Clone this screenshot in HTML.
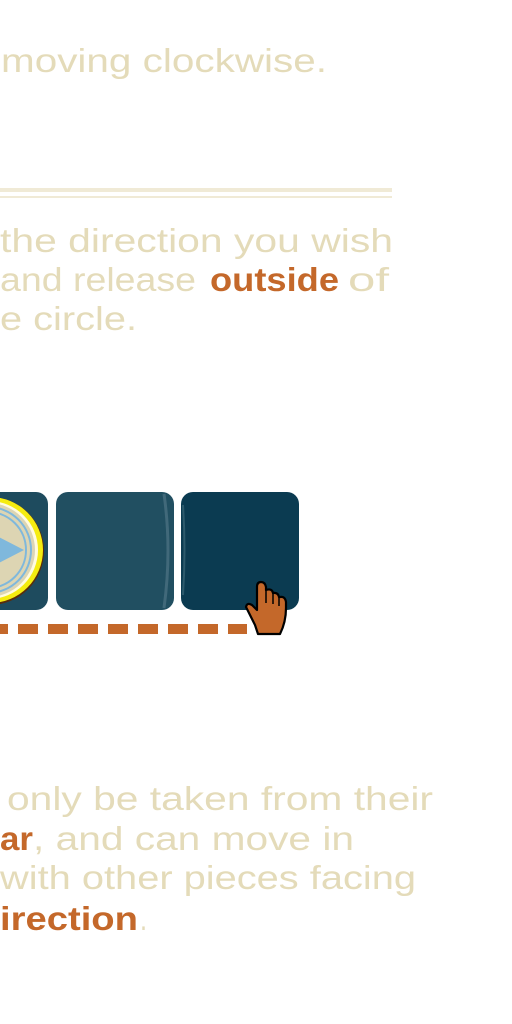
<!DOCTYPE html>
<html><head><meta charset="utf-8"><style>
html,body{margin:0;padding:0;background:#fff;width:512px;height:1024px;overflow:hidden}
svg{display:block}
text{font-family:"Liberation Sans",sans-serif;font-size:33px}
.l{fill:#e4dbb9}
.b{fill:#c4682a;font-weight:bold}
</style></head><body>
<svg width="512" height="1024" viewBox="0 0 512 1024">
<text class="l" x="1" y="72" textLength="326" lengthAdjust="spacingAndGlyphs">moving clockwise.</text>
<rect x="0" y="188" width="392" height="4" fill="#f0ead6"/>
<rect x="0" y="196" width="392" height="2" fill="#f0ead6"/>
<text class="l" x="0" y="252" textLength="393" lengthAdjust="spacingAndGlyphs">the direction you wish</text>
<text class="l" x="0" y="291" textLength="196" lengthAdjust="spacingAndGlyphs">and release</text>
<text class="b" x="210" y="291" textLength="129" lengthAdjust="spacingAndGlyphs">outside</text>
<text class="l" x="348" y="291" textLength="41" lengthAdjust="spacingAndGlyphs">of</text>
<text class="l" x="0" y="330" textLength="137" lengthAdjust="spacingAndGlyphs">e circle.</text>

<!-- tiles -->
<rect x="-20" y="492" width="68" height="118" rx="12" fill="#1e4b5e"/>
<g>
<circle cx="-10" cy="551" r="54" fill="#5a2d0c"/>
<circle cx="-10" cy="550" r="53" fill="#f5ec10"/>
<circle cx="-11" cy="550" r="49" fill="#fffbe0"/>
<circle cx="-12" cy="550" r="47" fill="#ddd5b3"/>
<circle cx="-12" cy="550" r="43" fill="none" stroke="#7fb8dc" stroke-width="2"/>
<circle cx="-12" cy="550" r="38" fill="none" stroke="#7fb8dc" stroke-width="2"/>
<polygon points="24,550 -5,535 -5,565" fill="#7fb8dc"/>
</g>
<rect x="56" y="492" width="118" height="118" rx="12" fill="#214f61"/>
<path d="M164 494 Q172 550 164 608" stroke="#41697a" stroke-width="3" fill="none"/>
<rect x="181" y="492" width="118" height="118" rx="12" fill="#0b3b51"/>
<path d="M183 505 Q186 550 183 595" stroke="#2d5a6c" stroke-width="2" fill="none"/>

<!-- dashes -->
<g fill="#c4682a">
<rect x="0" y="624" width="8" height="10"/>
<rect x="18" y="624" width="20" height="10"/>
<rect x="48" y="624" width="20" height="10"/>
<rect x="78" y="624" width="20" height="10"/>
<rect x="108" y="624" width="20" height="10"/>
<rect x="138" y="624" width="20" height="10"/>
<rect x="168" y="624" width="20" height="10"/>
<rect x="198" y="624" width="20" height="10"/>
<rect x="228" y="624" width="19" height="10"/>
</g>
<!-- hand -->
<path d="M258 634 L280 634 Q286 622 286 608 L286 602 Q285 596 280 597 L279 597 Q278 592 273 593 Q272 588 266 590 L266 587 Q265 582 261 582 Q257 582 257 587 L257 610 L252 605 Q247 602 246 607 L255 625 Z" fill="#c4682a" stroke="#000" stroke-width="2.2" stroke-linejoin="round"/>
<path d="M266 590 L266 603 M273 593 L273 604 M279 597 L279 606" stroke="#000" stroke-width="1.5" fill="none"/>

<text class="l" x="7" y="810" textLength="426" lengthAdjust="spacingAndGlyphs">only be taken from their</text>
<text class="b" x="0" y="850" textLength="33" lengthAdjust="spacingAndGlyphs">ar</text>
<text class="l" x="33" y="850" textLength="321" lengthAdjust="spacingAndGlyphs">, and can move in</text>
<text class="l" x="0" y="889" textLength="416" lengthAdjust="spacingAndGlyphs">with other pieces facing</text>
<text class="b" x="0" y="930" textLength="138" lengthAdjust="spacingAndGlyphs">irection</text>
<text class="l" x="140" y="930" textLength="7" lengthAdjust="spacingAndGlyphs">.</text>
</svg>
</body></html>
